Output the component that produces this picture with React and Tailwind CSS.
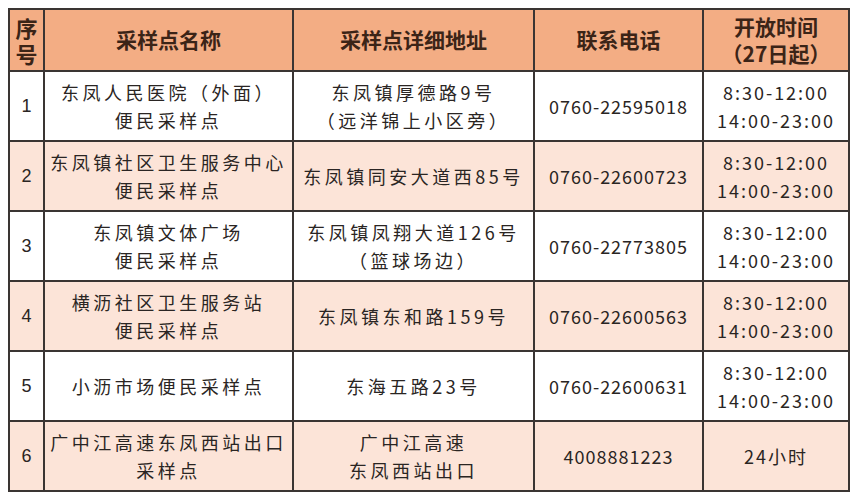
import React from 'react';

const rows = [
  { no: '1', name: ['东凤人民医院（外面）', '便民采样点'], addr: ['东凤镇厚德路9号', '（远洋锦上小区旁）'], tel: '0760-22595018', time: ['8:30-12:00', '14:00-23:00'] },
  { no: '2', name: ['东凤镇社区卫生服务中心', '便民采样点'], addr: ['东凤镇同安大道西85号'], tel: '0760-22600723', time: ['8:30-12:00', '14:00-23:00'] },
  { no: '3', name: ['东凤镇文体广场', '便民采样点'], addr: ['东凤镇凤翔大道126号', '（篮球场边）'], tel: '0760-22773805', time: ['8:30-12:00', '14:00-23:00'] },
  { no: '4', name: ['横沥社区卫生服务站', '便民采样点'], addr: ['东凤镇东和路159号'], tel: '0760-22600563', time: ['8:30-12:00', '14:00-23:00'] },
  { no: '5', name: ['小沥市场便民采样点'], addr: ['东海五路23号'], tel: '0760-22600631', time: ['8:30-12:00', '14:00-23:00'] },
  { no: '6', name: ['广中江高速东凤西站出口', '采样点'], addr: ['广中江高速', '东凤西站出口'], tel: '4008881223', time: ['24小时'] },
];

const cell = 'border-2 border-[#3a3533] text-center align-middle p-0';

const Lines = ({ items }) => (
  <div className="flex flex-col items-center leading-[28px]">
    {items.map((t, i) => (
      <span key={i}>{t}</span>
    ))}
  </div>
);

const App = () => {
  return (
    <div className="w-[857px] h-[500px] bg-white pt-[8px] pl-[8px]" style={{ fontFamily: '"Noto Sans CJK SC", "Noto Sans", sans-serif' }}>
      <table className="border-collapse table-fixed w-[840px] text-[#2a2523]">
        <colgroup>
          <col className="w-[35px]" />
          <col className="w-[249px]" />
          <col className="w-[241px]" />
          <col className="w-[169px]" />
          <col className="w-[146px]" />
        </colgroup>
        <thead>
          <tr className="h-[62px] bg-[#f3ad84] text-[#3b2417] font-bold">
            <th className={cell}>
              <p className="text-[22px] leading-[26px]">序<br />号</p>
            </th>
            <th className={`${cell} text-[21px]`}>采样点名称</th>
            <th className={`${cell} text-[21px]`}>采样点详细地址</th>
            <th className={`${cell} text-[21px]`}>联系电话</th>
            <th className={cell}>
              <p className="text-[21px] leading-[27px]">开放时间<br />（27日起）</p>
            </th>
          </tr>
        </thead>
        <tbody>
          {rows.map((r, i) => (
            <tr key={r.no} className={`h-[70px] ${i % 2 === 1 ? 'bg-[#fce4d8]' : 'bg-white'}`}>
              <td className={`${cell} text-[18px]`} style={{ fontFamily: '"Liberation Sans", sans-serif' }}>{r.no}</td>
              <td className={`${cell} text-[18px] tracking-[3.5px]`}><Lines items={r.name} /></td>
              <td className={`${cell} text-[18px] tracking-[3.5px]`}><Lines items={r.addr} /></td>
              <td className={`${cell} text-[18px] tracking-[1px]`}>{r.tel}</td>
              <td className={`${cell} text-[18px] tracking-[2px]`}><Lines items={r.time} /></td>
            </tr>
          ))}
        </tbody>
      </table>
    </div>
  );
};

export default App;
